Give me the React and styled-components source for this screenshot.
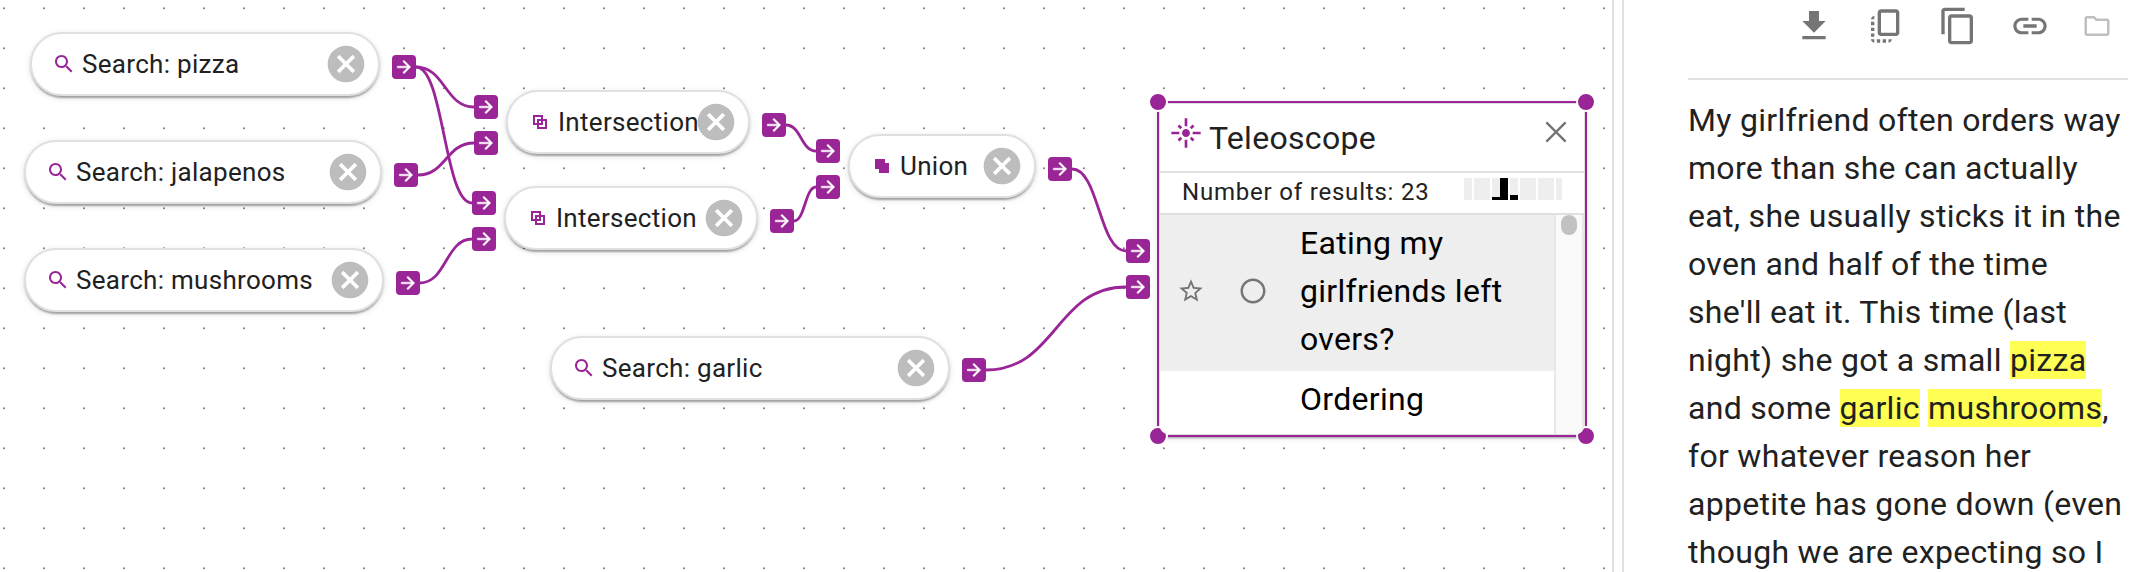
import React from "react";
import styled, { createGlobalStyle, css } from "styled-components";

const PURPLE = "#9a2596";
const FONT = 'Roboto, "Liberation Sans", sans-serif';

const GlobalStyle = createGlobalStyle`
  * { box-sizing: border-box; }
  body { margin: 0; background: #fff; }
`;

const Page = styled.div`
  display: flex;
  width: 2132px;
  height: 572px;
  overflow: hidden;
  font-family: ${FONT};
  color: #212121;
`;

const Canvas = styled.main`
  position: relative;
  flex: 0 0 1612px;
  overflow: hidden;
  background: #fff;
`;

const Backdrop = styled.svg`
  position: absolute;
  inset: 0;
`;

const cardShadow = css`
  box-shadow: 0 4px 2px -2px rgba(0, 0, 0, 0.2), 0 2px 2px 0 rgba(0, 0, 0, 0.14),
    0 2px 6px 0 rgba(0, 0, 0, 0.12);
`;

const Pill = styled.div`
  position: absolute;
  left: ${(p) => p.$x}px;
  top: ${(p) => p.$y}px;
  width: ${(p) => p.$w}px;
  height: 64px;
  display: flex;
  align-items: center;
  padding: 0 10px 0 20px;
  border: 2px solid #e0e0e0;
  border-radius: 32px;
  background: #fff;
  ${cardShadow}
`;

const PillLabel = styled.span`
  flex: 1;
  min-width: 0;
  margin-left: 6px;
  font-size: 26px;
  letter-spacing: 0.3px;
  white-space: nowrap;
`;

const Port = styled.span`
  position: absolute;
  left: ${(p) => p.$x}px;
  top: ${(p) => p.$y}px;
  width: 24px;
  height: 24px;
  display: flex;
  align-items: center;
  justify-content: center;
  border-radius: 4px;
  background: ${PURPLE};
`;

const Glyph = styled.svg`
  display: block;
  flex: none;
  fill: ${(p) => p.$color};
  stroke: ${(p) => (p.$bold ? p.$color : "none")};
  stroke-width: ${(p) => p.$bold || 0};
`;

const Panel = styled.section`
  position: absolute;
  left: 1158px;
  top: 102px;
  width: 428px;
  height: 334px;
  display: flex;
  flex-direction: column;
  border: 2px solid #e0e0e0;
  background: #fff;
  ${cardShadow}
`;

const PanelHeader = styled.header`
  display: flex;
  align-items: flex-start;
  height: 69px;
  padding: 13px 16px 0 10px;
  border-bottom: 2px solid #e0e0e0;
`;

const PanelTitle = styled.h1`
  flex: 1;
  margin: 2px 0 0 7px;
  font-size: 32px;
  line-height: 38px;
  font-weight: 400;
  letter-spacing: 0.3px;
`;

const CloseButton = styled.button`
  display: flex;
  padding: 3px 0 0;
  border: 0;
  background: none;
`;

const Summary = styled.div`
  display: flex;
  align-items: flex-start;
  justify-content: space-between;
  height: 42px;
  padding: 5px 22px 0 22px;
  border-bottom: 2px solid #e0e0e0;
  font-size: 24px;
  line-height: 28px;
  letter-spacing: 0.8px;
`;

const Histogram = styled.div`
  display: flex;
  height: 22px;
`;

const Bar = styled.span`
  display: flex;
  align-items: flex-end;
  width: ${(p) => p.$w}px;
  margin-left: ${(p) => p.$gap || 0}px;
  background: #eee;

  &::after {
    content: "";
    width: 100%;
    height: ${(p) => p.$level || 0}px;
    background: #000;
  }
`;

const Results = styled.div`
  position: relative;
  z-index: 2;
  flex: 1;
  display: flex;
  min-height: 0;
  overflow: hidden;
  border-radius: 0 0 8px 8px;
  background: #fff;
`;

const ResultList = styled.div`
  flex: 1;
`;

const ResultRow = styled.div`
  display: flex;
  align-items: center;
  padding: 4px 0 8px 17px;
  background: ${(p) => (p.$selected ? "#eee" : "#fff")};
`;

const IconSlot = styled.span`
  display: flex;
  width: ${(p) => p.$w}px;
`;

const ResultTitle = styled.span`
  width: 230px;
  font-size: 32px;
  line-height: 48px;
  letter-spacing: 0.3px;
  color: #000;
`;

const Scrollbar = styled.div`
  display: flex;
  justify-content: center;
  width: 30px;
  border: solid #e8e8e8;
  border-width: 0 2px;
  background: #fafafa;
`;

const Thumb = styled.span`
  width: 16px;
  height: 20px;
  border-radius: 8px;
  background: #c1c1c1;
`;

const ResizeLine = styled.span`
  position: absolute;
  z-index: 1;
  left: ${(p) => p.$x}px;
  top: ${(p) => p.$y}px;
  width: ${(p) => p.$w || 2}px;
  height: ${(p) => p.$h || 2}px;
  background: ${PURPLE};
`;

const ResizeKnob = styled.span`
  position: absolute;
  z-index: 1;
  left: ${(p) => p.$x}px;
  top: ${(p) => p.$y}px;
  width: 20px;
  height: 20px;
  border: 2px solid #fff;
  border-radius: 50%;
  background: ${PURPLE};
`;

const Splitter = styled.div`
  flex: 0 0 12px;
  border: solid;
  border-width: 0 2px;
  border-color: #ccc #e0e0e0;
`;

const Reader = styled.aside`
  flex: 1;
  padding: 0 4px 0 64px;
`;

const Toolbar = styled.div`
  display: flex;
  align-items: center;
  gap: 32px;
  height: 80px;
  padding: 0 0 26px 106px;
  border-bottom: 2px solid #e0e0e0;
`;

const Story = styled.p`
  width: 440px;
  margin: 16px 0 0;
  font-size: 32px;
  line-height: 48px;
  letter-spacing: 0.3px;
`;

const Highlight = styled.mark`
  background: #ffff54;
  color: inherit;
`;

const PATHS = {
  search:
    "M15.5 14h-.79l-.28-.27C15.41 12.59 16 11.11 16 9.5 16 5.91 13.09 3 9.5 3S3 5.91 3 9.5 5.91 16 9.5 16c1.61 0 3.09-.59 4.23-1.57l.27.28v.79l5 4.99L20.49 19l-4.99-5zm-6 0C7.01 14 5 11.99 5 9.5S7.01 5 9.5 5 14 7.01 14 9.5 11.99 14 9.5 14z",
  intersection:
    "M5 5h10v4h4v10H9v-4H5zM7 7h6v2H9v4H7zM17 17h-6v-2h4v-4h2zM11 11h2v2h-2z",
  union: "M5 5h10v4h4v10H9v-4H5z",
  cancel:
    "M12 2C6.47 2 2 6.47 2 12s4.47 10 10 10 10-4.47 10-10S17.53 2 12 2zm5 13.59L15.59 17 12 13.41 8.41 17 7 15.59 10.59 12 7 8.41 8.41 7 12 10.59 15.59 7 17 8.41 13.41 12 17 15.59z",
  arrow: "m12 4-1.41 1.41L16.17 11H4v2h12.17l-5.58 5.59L12 20l8-8z",
  flare:
    "M7 11H1v2h6v-2zm2.17-3.24L7.05 5.64 5.64 7.05l2.12 2.12 1.41-1.41zM13 1h-2v6h2V1zm5.36 6.05-1.41-1.41-2.12 2.12 1.41 1.41 2.12-2.12zM17 11v2h6v-2h-6zm-5-2c-1.66 0-3 1.34-3 3s1.34 3 3 3 3-1.34 3-3-1.34-3-3-3zm2.83 7.24 2.12 2.12 1.41-1.41-2.12-2.12-1.41 1.41zm-9.19.71 1.41 1.41 2.12-2.12-1.41-1.41-2.12 2.12zM11 23h2v-6h-2v6z",
  star:
    "M22 9.24l-7.19-.62L12 2 9.19 8.63 2 9.24l5.46 4.73L5.82 21 12 17.27 18.18 21l-1.63-7.03L22 9.24zM12 15.4l-3.76 2.27 1-4.28-3.32-2.88 4.38-.38L12 6.1l1.71 4.04 4.38.38-3.32 2.88 1 4.28L12 15.4z",
  circle:
    "M12 2C6.48 2 2 6.48 2 12s4.48 10 10 10 10-4.48 10-10S17.52 2 12 2zm0 18c-4.42 0-8-3.58-8-8s3.58-8 8-8 8 3.58 8 8-3.58 8-8 8z",
  download: "M19 9h-4V3H9v6H5l7 7 7-7zM5 18v2h14v-2H5z",
  copyAll:
    "M18 2H9c-1.1 0-2 .9-2 2v12c0 1.1.9 2 2 2h9c1.1 0 2-.9 2-2V4c0-1.1-.9-2-2-2zm0 14H9V4h9v12zM3 15v-2h2v2H3zm0-5.5h2v2H3v-2zM10 20h2v2h-2v-2zm-7-1.5v-2h2v2H3zM5 22c-1.1 0-2-.9-2-2h2v2zm3.5 0h-2v-2h2v2zm5 0v-2h2c0 1.1-.9 2-2 2zM5 6v2H3c0-1.1.9-2 2-2z",
  copy:
    "M16 1H4c-1.1 0-2 .9-2 2v14h2V3h12V1zm3 4H8c-1.1 0-2 .9-2 2v14c0 1.1.9 2 2 2h11c1.1 0 2-.9 2-2V7c0-1.1-.9-2-2-2zm0 16H8V7h11v14z",
  link:
    "M3.9 12c0-1.71 1.39-3.1 3.1-3.1h4V7H7c-2.76 0-5 2.24-5 5s2.24 5 5 5h4v-1.9H7c-1.71 0-3.1-1.39-3.1-3.1zM8 13h8v-2H8v2zm9-6h-4v1.9h4c1.71 0 3.1 1.39 3.1 3.1s-1.39 3.1-3.1 3.1h-4V17h4c2.76 0 5-2.24 5-5s-2.24-5-5-5z",
  folder:
    "m9.17 6 2 2H20v10H4V6h5.17M10 4H4c-1.1 0-1.99.9-1.99 2L2 18c0 1.1.9 2 2 2h16c1.1 0 2-.9 2-2V8c0-1.1-.9-2-2-2h-8l-2-2z",
};

function Icon({ name, size, color = "#757575", bold }) {
  return (
    <Glyph viewBox="0 0 24 24" width={size} height={size} $color={color} $bold={bold}>
      <path d={PATHS[name]} fillRule="evenodd" />
    </Glyph>
  );
}

const NODES = [
  { label: "Search: pizza", icon: "search", x: 30, y: 32, w: 350 },
  { label: "Search: jalapenos", icon: "search", x: 24, y: 140, w: 358 },
  { label: "Search: mushrooms", icon: "search", x: 24, y: 248, w: 360 },
  { label: "Intersection", icon: "intersection", x: 506, y: 90, w: 244 },
  { label: "Intersection", icon: "intersection", x: 504, y: 186, w: 254 },
  { label: "Union", icon: "union", x: 848, y: 134, w: 188 },
  { label: "Search: garlic", icon: "search", x: 550, y: 336, w: 400 },
];

const PORTS = [
  [392, 55], [394, 163], [396, 271],
  [474, 95], [474, 131], [762, 113],
  [472, 191], [472, 227], [770, 209],
  [816, 139], [816, 175], [1048, 157],
  [962, 358], [1126, 239], [1126, 275],
];

const EDGES = [
  [416, 67, 474, 107], [416, 67, 472, 203], [418, 175, 474, 143], [420, 283, 472, 239],
  [786, 125, 816, 151], [794, 221, 816, 187], [1072, 169, 1126, 251], [986, 370, 1126, 287],
];

const BARS = [
  { w: 8 }, { w: 16, gap: 2 }, { w: 8, gap: 2, level: 3 }, { w: 8, level: 22 },
  { w: 8, gap: 2, level: 5 }, { w: 16, gap: 2 }, { w: 16, gap: 2 }, { w: 6, gap: 2 },
];

const edgePath = ([x1, y1, x2, y2]) => {
  const mid = (x1 + x2) / 2;
  return `M${x1} ${y1}C${mid} ${y1} ${mid} ${y2} ${x2} ${y2}`;
};

function Teleoscope() {
  return (
    <Panel>
      <PanelHeader>
        <Icon name="flare" size={32} color={PURPLE} />
        <PanelTitle>Teleoscope</PanelTitle>
        <CloseButton aria-label="Close">
          <svg width="24" height="24" fill="none" stroke="#757575" strokeWidth="2.4">
            <path d="M2.4 2.4 21.6 21.6M21.6 2.4 2.4 21.6" />
          </svg>
        </CloseButton>
      </PanelHeader>
      <Summary>
        Number of results: 23
        <Histogram>
          {BARS.map((b, i) => (
            <Bar key={i} $w={b.w} $gap={b.gap} $level={b.level} />
          ))}
        </Histogram>
      </Summary>
      <Results>
        <ResultList>
          <ResultRow $selected>
            <IconSlot $w={61}><Icon name="star" size={28} /></IconSlot>
            <IconSlot $w={62}><Icon name="circle" size={30} /></IconSlot>
            <ResultTitle>Eating my girlfriends left overs?</ResultTitle>
          </ResultRow>
          <ResultRow>
            <IconSlot $w={123} />
            <ResultTitle>Ordering</ResultTitle>
          </ResultRow>
        </ResultList>
        <Scrollbar><Thumb /></Scrollbar>
      </Results>
    </Panel>
  );
}

export default function App() {
  return (
    <Page>
      <GlobalStyle />
      <Canvas>
        <Backdrop width="1612" height="572">
          <defs>
            <pattern id="dots" width="40" height="40" patternUnits="userSpaceOnUse">
              <circle cx="3.9" cy="8.2" r="1" fill="#777" />
            </pattern>
          </defs>
          <rect width="1612" height="572" fill="url(#dots)" />
          {EDGES.map((e, i) => (
            <path key={i} d={edgePath(e)} fill="none" stroke={PURPLE} strokeWidth="2.8" />
          ))}
        </Backdrop>
        {NODES.map((n, i) => (
          <Pill key={i} $x={n.x} $y={n.y} $w={n.w}>
            <Icon name={n.icon} size={24} color={PURPLE} />
            <PillLabel>{n.label}</PillLabel>
            <Icon name="cancel" size={44} color="#bdbdbd" />
          </Pill>
        ))}
        {PORTS.map(([x, y]) => (
          <Port key={`${x}-${y}`} $x={x} $y={y}>
            <Icon name="arrow" size={20} color="#fff" bold={0.6} />
          </Port>
        ))}
        <ResizeLine $x={1158} $y={101} $w={428} />
        <ResizeLine $x={1158} $y={435} $w={428} />
        <ResizeLine $x={1157} $y={102} $h={334} />
        <ResizeLine $x={1585} $y={102} $h={334} />
        <ResizeKnob $x={1148} $y={92} />
        <ResizeKnob $x={1576} $y={92} />
        <ResizeKnob $x={1148} $y={426} />
        <ResizeKnob $x={1576} $y={426} />
        <Teleoscope />
      </Canvas>
      <Splitter />
      <Reader>
        <Toolbar>
          <Icon name="download" size={40} />
          <Icon name="copyAll" size={40} />
          <Icon name="copy" size={40} />
          <Icon name="link" size={40} />
          <Icon name="folder" size={30} color="#c0c0c0" />
        </Toolbar>
        <Story>
          My girlfriend often orders way more than she can actually eat, she usually sticks it in
          the oven and half of the time she'll eat it. This time (last night) she got a small{" "}
          <Highlight>pizza</Highlight> and some <Highlight>garlic</Highlight>{" "}
          <Highlight>mushrooms</Highlight>, for whatever reason her appetite has gone down (even
          though we are expecting so I
        </Story>
      </Reader>
    </Page>
  );
}
